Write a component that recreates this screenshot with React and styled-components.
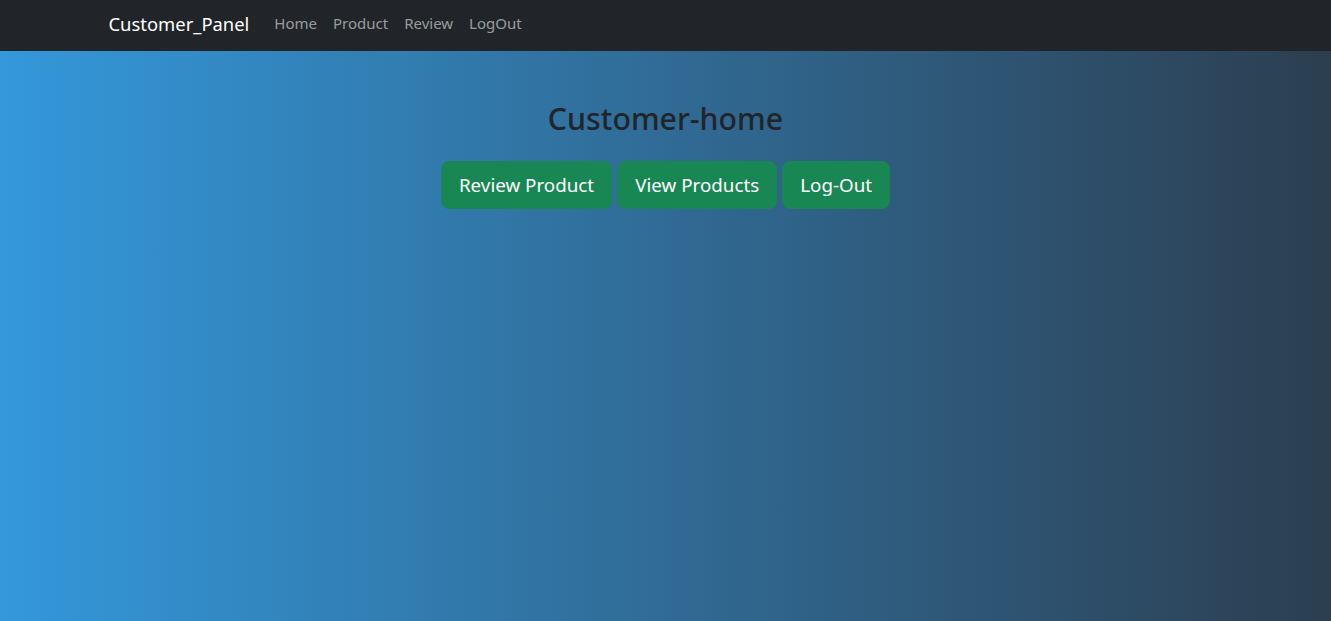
import React from "react";
import styled, { createGlobalStyle } from "styled-components";

const GlobalStyle = createGlobalStyle`
  html, body {
    margin: 0;
    padding: 0;
  }
  body {
    font-family: "Noto Sans", "Liberation Sans", sans-serif;
    color: #212529;
  }
`;

const Page = styled.div`
  min-height: 621px;
  display: flex;
  flex-direction: column;
  background: linear-gradient(to right, #3498db, #2c3e50);
`;

const Navbar = styled.nav`
  height: 51px;
  background-color: #212529;
  display: flex;
  align-items: center;
`;

const NavContainer = styled.div`
  width: 1140px;
  margin: 0 auto;
  padding: 0 12px 5px;
  box-sizing: border-box;
  display: flex;
  align-items: center;
`;

const Brand = styled.a`
  color: #fff;
  font-size: 18.4px;
  margin-left: 1px;
  margin-right: 25px;
  text-decoration: none;
`;

const NavList = styled.div`
  display: flex;
  gap: 16px;
`;

const NavLink = styled.a`
  color: rgba(255, 255, 255, 0.55);
  font-size: 15px;
  text-decoration: none;
`;

const Main = styled.main`
  display: flex;
  flex-direction: column;
  align-items: center;
  padding-top: 50px;
`;

const Title = styled.h2`
  margin: 0 0 24px;
  font-size: 30.3px;
  font-weight: 500;
  line-height: 1.2;
  color: #212529;
`;

const ButtonRow = styled.div`
  display: flex;
  gap: 5px;
`;

const Button = styled.button`
  height: 48px;
  padding: 0 17px;
  border: 1px solid #198754;
  border-radius: 8px;
  background-color: #198754;
  color: #fff;
  font-family: inherit;
  font-size: 18.8px;
  cursor: pointer;
`;

export default function App() {
  return (
    <>
      <GlobalStyle />
      <Page>
        <Navbar>
          <NavContainer>
            <Brand href="#">Customer_Panel</Brand>
            <NavList>
              <NavLink href="#">Home</NavLink>
              <NavLink href="#">Product</NavLink>
              <NavLink href="#">Review</NavLink>
              <NavLink href="#">LogOut</NavLink>
            </NavList>
          </NavContainer>
        </Navbar>
        <Main>
          <Title>Customer-home</Title>
          <ButtonRow>
            <Button>Review Product</Button>
            <Button>View Products</Button>
            <Button>Log-Out</Button>
          </ButtonRow>
        </Main>
      </Page>
    </>
  );
}
